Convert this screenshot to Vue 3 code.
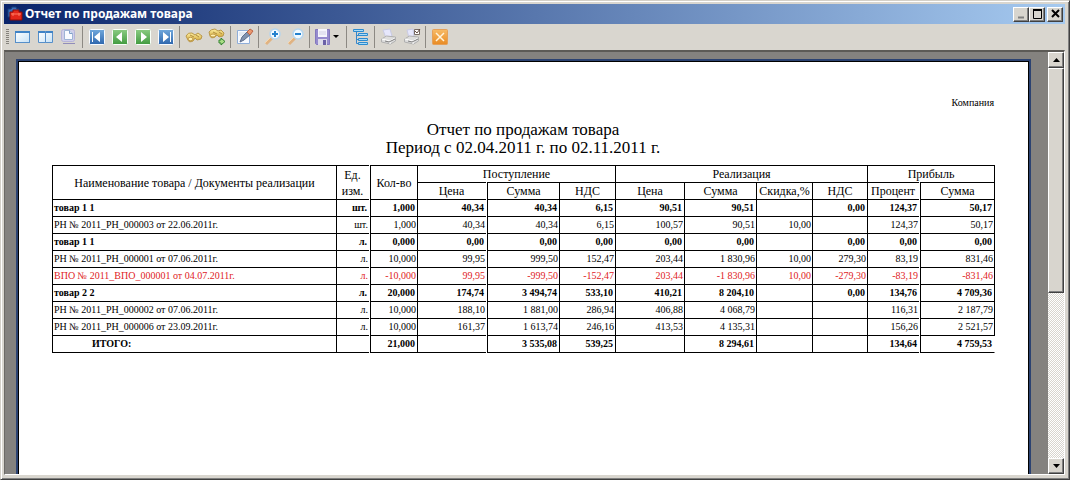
<script setup>
const rows = [
  { kind: 'group', cells: ['товар 1 1', 'шт.', '1,000', '40,34', '40,34', '6,15', '90,51', '90,51', '', '0,00', '124,37', '50,17'] },
  { kind: 'doc', cells: ['РН № 2011_РН_000003 от 22.06.2011г.', 'шт.', '1,000', '40,34', '40,34', '6,15', '100,57', '90,51', '10,00', '', '124,37', '50,17'] },
  { kind: 'group', cells: ['товар 1 1', 'л.', '0,000', '0,00', '0,00', '0,00', '0,00', '0,00', '', '0,00', '0,00', '0,00'] },
  { kind: 'doc', cells: ['РН № 2011_РН_000001 от 07.06.2011г.', 'л.', '10,000', '99,95', '999,50', '152,47', '203,44', '1 830,96', '10,00', '279,30', '83,19', '831,46'] },
  { kind: 'doc refund', cells: ['ВПО № 2011_ВПО_000001 от 04.07.2011г.', 'л.', '-10,000', '99,95', '-999,50', '-152,47', '203,44', '-1 830,96', '10,00', '-279,30', '-83,19', '-831,46'] },
  { kind: 'group', cells: ['товар 2 2', 'л.', '20,000', '174,74', '3 494,74', '533,10', '410,21', '8 204,10', '', '0,00', '134,76', '4 709,36'] },
  { kind: 'doc', cells: ['РН № 2011_РН_000002 от 07.06.2011г.', 'л.', '10,000', '188,10', '1 881,00', '286,94', '406,88', '4 068,79', '', '', '116,31', '2 187,79'] },
  { kind: 'doc', cells: ['РН № 2011_РН_000006 от 23.09.2011г.', 'л.', '10,000', '161,37', '1 613,74', '246,16', '413,53', '4 135,31', '', '', '156,26', '2 521,57'] },
  { kind: 'group total', cells: ['ИТОГО:', '', '21,000', '', '3 535,08', '539,25', '', '8 294,61', '', '', '134,64', '4 759,53'] },
]
const gaps = [1, 3, 10]
</script>

<template>
  <div class="window">
    <header class="titlebar">
      <svg class="logo" width="16" height="16" viewBox="0 0 16 16">
        <path d="M1 3h3l1-2h4l1 2h2v8H1z" fill="#3a6db8" stroke="#163c78" />
        <path d="M3 6h3V4h6v2h3v8H3z" fill="#e3271a" stroke="#8c0d08" />
        <path d="M4 8h10M6 7v3M12 7v3" stroke="#ff7a60" />
      </svg>
      <h1>Отчет по продажам товара</h1>
      <div class="controls">
        <button class="raised" aria-label="Свернуть"><svg width="13" height="12"><path d="M3 9.500h6" stroke="#808080" stroke-width="2" /></svg></button>
        <button class="raised" aria-label="Развернуть"><svg width="13" height="12"><path d="M2.500 2v8.500h8V2M2 2.500h9M2 1.500h9" fill="none" stroke="#000" /></svg></button>
        <button class="raised close" aria-label="Закрыть"><svg width="13" height="12"><path d="M3 2l7 7M10 2l-7 7" stroke="#000" stroke-width="2" /></svg></button>
      </div>
    </header>

    <nav class="toolbar" aria-label="Панель инструментов">
      <span class="grip"></span>
      <button aria-label="Одна страница"><svg width="18" height="18"><rect x="1.500" y="3.500" width="14" height="11" fill="url(#pane)" stroke="#568fc9" /><path d="M1 4h15" stroke="#3f83c6" stroke-width="2" />
        <defs>
          <linearGradient id="pane" x2="1" y2="1"><stop stop-color="#fff" /><stop offset="1" stop-color="#c7e2f6" /></linearGradient>
          <linearGradient id="blue" x2="0" y2="1"><stop stop-color="#72a9dc" /><stop offset="1" stop-color="#2d66ad" /></linearGradient>
          <linearGradient id="green" x2="0" y2="1"><stop stop-color="#8ccc83" /><stop offset="1" stop-color="#419b3f" /></linearGradient>
          <linearGradient id="gold" x2="0" y2="1"><stop stop-color="#fff1a4" /><stop offset="1" stop-color="#cc9f2e" /></linearGradient>
          <linearGradient id="orange" x2="0" y2="1"><stop stop-color="#f7bb67" /><stop offset="1" stop-color="#e88b24" /></linearGradient>
        </defs></svg></button>
      <button aria-label="Две страницы"><svg width="18" height="18"><path d="M1.500 3.500h7v11h-7zM8.500 3.500h7v11h-7z" fill="url(#pane)" stroke="#568fc9" /><path d="M1 4h7M9 4h7" stroke="#3f83c6" stroke-width="2" /></svg></button>
      <button aria-label="Ширина страницы"><svg width="18" height="18"><rect x="1.500" y="1.500" width="13" height="12" rx="2" fill="#d0cfe9" stroke="#b5b3d9" /><path d="M4.500 2.500h5l3 3v6h-8z" fill="#f8fbff" stroke="#9eb4d5" /><path d="M9.500 2.500v3h3" fill="#d6e4f5" stroke="#809ec8" /><path d="M3 15.500h12" stroke="#918dba" /></svg></button>
      <span class="sep"></span>
      <button aria-label="Первая страница"><svg width="18" height="18"><rect x="1.500" y="1.500" width="15" height="15" rx="1" fill="url(#blue)" stroke="#f8fbff" /><path d="M4 4h1v10H4zM12 4v10L6 9z" fill="#fff" /></svg></button>
      <button aria-label="Предыдущая страница"><svg width="18" height="18"><rect x="1.500" y="1.500" width="15" height="15" rx="1" fill="url(#green)" stroke="#f8fff8" /><path d="M11 4v10L5 9z" fill="#fff" /></svg></button>
      <button aria-label="Следующая страница"><svg width="18" height="18"><rect x="1.500" y="1.500" width="15" height="15" rx="1" fill="url(#green)" stroke="#f8fff8" /><path d="M7 4v10l6-5z" fill="#fff" /></svg></button>
      <button aria-label="Последняя страница"><svg width="18" height="18"><rect x="1.500" y="1.500" width="15" height="15" rx="1" fill="url(#blue)" stroke="#f8fbff" /><path d="M13 4h1v10h-1zM6 4v10l6-5z" fill="#fff" /></svg></button>
      <span class="sep"></span>
      <button aria-label="Найти"><svg width="18" height="18"><path d="M1 8q2-4 6-3l3 2 3-2 4 3-1 3-4 1-2-2-2 3q-4 2-5-1z" fill="url(#gold)" stroke="#b9984b" /><ellipse cx="5.500" cy="11" rx="2.500" ry="1.700" fill="#fff0b0" stroke="#c19c48" /><path d="M5 7l4 2M11 7l3 2" stroke="#b08e40" /></svg></button>
      <button aria-label="Найти далее"><svg width="18" height="18"><path d="M1 4q2-3 6-3l3 2 3-1 3 3-1 3-4 1-2-2-2 2q-4 2-5-1z" fill="url(#gold)" stroke="#b9984b" /><ellipse cx="5" cy="7.500" rx="2.500" ry="1.500" fill="#fff0b0" stroke="#c19c48" /><path d="M5 4l4 2M11 4l3 2" stroke="#b08e40" /><path d="M11 12h2v-2l4 3.500-4 3.500v-2h-2z" fill="#a9dd85" stroke="#32832e" /></svg></button>
      <span class="sep"></span>
      <button aria-label="Редактировать"><svg width="18" height="18"><path d="M1.500 2.500h12v13h-12z" fill="#f7faff" stroke="#8faed9" /><path d="M3 5h7M3 7h5" stroke="#cfdae9" /><path d="M4 14l2-5 6-6 3 3-7 6z" fill="#8093b0" stroke="#5d6d8c" /><path d="M11 4l3-3 3 2-3 4z" fill="#ea9870" stroke="#bd6546" /></svg></button>
      <span class="sep"></span>
      <button aria-label="Увеличить"><svg width="18" height="18"><path d="M2 16l6-6" stroke="#e0b382" stroke-width="3" /><path d="M1 15l6-6" stroke="#f9d7ac" /><circle cx="11" cy="6" r="5" fill="#f1faff" stroke="#b5d5ee" stroke-width="1.500" /><path d="M8 6h6M11 3v6" stroke="#2482cf" stroke-width="2" /></svg></button>
      <button aria-label="Уменьшить"><svg width="18" height="18"><path d="M2 16l6-6" stroke="#e0b382" stroke-width="3" /><path d="M1 15l6-6" stroke="#f9d7ac" /><circle cx="11" cy="6" r="5" fill="#f1faff" stroke="#b5d5ee" stroke-width="1.500" /><path d="M8 6h6" stroke="#2482cf" stroke-width="2" /></svg></button>
      <span class="sep"></span>
      <button class="save" aria-label="Сохранить"><svg width="28" height="18"><path d="M1.500 1.500h14v15h-13l-1-1z" fill="#968bce" stroke="#8378bd" /><path d="M4 1h9v8H4z" fill="#f5f5fc" /><path d="M5 4h7M5 6h7" stroke="#d2d0e5" /><path d="M4 11h9v6H4z" fill="#dddbea" /><path d="M9 12h3v5H9z" fill="#6b61a7" /><path d="M19 7h6l-3 3z" fill="#000" /></svg></button>
      <span class="sep"></span>
      <button aria-label="Структура"><svg width="18" height="18"><path d="M4.500 4v11.500H8M4.500 7.500H8M4.500 11.500H8" fill="none" stroke="#3687ca" /><path d="M1.500 1.500h10v2h-10zM6.500 5.500h9v2h-9zM6.500 10.500h9v2h-9zM6.500 14.500h9v2h-9z" fill="#a8dbf8" stroke="#2c8bcf" /></svg></button>
      <span class="sep"></span>
      <button aria-label="Печать"><svg width="18" height="18"><path d="M3 2l7-1 2 7-6 2z" fill="#e6e7fc" stroke="#c9cbe4" /><path d="M1.500 11l5-3 9 1v4l-5 3-9-2z" fill="#dedede" stroke="#b0b0b0" /><path d="M2 11l8 2 5-3M10 13v3" fill="none" stroke="#fff" /><path d="M5 13l4 1 6-3" fill="none" stroke="#7e7e7e" /></svg></button>
      <button aria-label="Настройка печати"><svg width="18" height="18"><path d="M4 2l6-1 1 7-5 2z" fill="#e6e7fc" stroke="#c9cbe4" /><path d="M1.500 11l5-3 9 1v4l-5 3-9-2z" fill="#dedede" stroke="#b0b0b0" /><path d="M2 11l8 2 5-3M10 13v3" fill="none" stroke="#fff" /><path d="M5 13l4 1 6-3" fill="none" stroke="#7e7e7e" /><path d="M11.500 1.500h5v5h-5z" fill="#fff" stroke="#776b65" /><path d="M12 3l2 2 3-4" fill="none" stroke="#654d43" /></svg></button>
      <span class="sep"></span>
      <button aria-label="Закрыть отчет"><svg width="18" height="18"><rect x="1.500" y="1.500" width="15" height="15" rx="1" fill="url(#orange)" stroke="#e5a059" /><path d="M5 5l8 8M13 5l-8 8" stroke="#fff4dd" stroke-width="1.500" /></svg></button>
    </nav>

    <main class="viewport">
      <div class="desk">
        <article class="page">
          <p class="company">Компания</p>
          <h2>Отчет по продажам товара<br>Период с 02.04.2011 г. по 02.11.2011 г.</h2>
          <table>
            <colgroup>
              <col class="name"><col class="unit"><col class="qty"><col class="price"><col class="sum"><col class="vat">
              <col class="price-out"><col class="sum"><col class="vat"><col class="vat-out"><col class="percent"><col class="profit">
            </colgroup>
            <thead>
              <tr>
                <th rowspan="2">Наименование товара / Документы реализации</th>
                <th rowspan="2" class="gap">Ед.<br>изм.</th>
                <th rowspan="2">Кол-во</th>
                <th colspan="3">Поступление</th>
                <th colspan="4">Реализация</th>
                <th colspan="2">Прибыль</th>
              </tr>
              <tr>
                <th class="gap">Цена</th><th>Сумма</th><th>НДС</th>
                <th>Цена</th><th>Сумма</th><th>Скидка,%</th><th>НДС</th>
                <th class="gap">Процент</th><th>Сумма</th>
              </tr>
            </thead>
            <tbody>
              <tr v-for="(row, r) in rows" :key="r" :class="row.kind">
                <td v-for="(cell, c) in row.cells" :key="c" :class="{ gap: gaps.includes(c) }">{{ cell }}</td>
              </tr>
            </tbody>
          </table>
        </article>
      </div>
      <div class="scrollbar">
        <button class="raised" aria-label="Прокрутить вверх"><svg width="7" height="4"><path d="M0 4h7L3.500 0z" /></svg></button>
        <div class="thumb raised"></div>
        <div class="track"></div>
        <button class="raised" aria-label="Прокрутить вниз"><svg width="7" height="4"><path d="M0 0h7L3.500 4z" /></svg></button>
      </div>
    </main>
  </div>
</template>

<style>
body { margin: 0; overflow: hidden; }
</style>

<style scoped>
* { box-sizing: border-box; }
button { padding: 0; margin: 0; border: 0; background: none; display: flex; align-items: center; justify-content: center; }
svg { display: block; flex: none; }
.window {
  height: 100vh;
  display: flex;
  flex-direction: column;
  padding: 2px 3px 3px 2px;
  background: #d9d6cf;
  border: 1px solid;
  border-color: #d4d0c8 #404040 #404040 #d4d0c8;
  box-shadow: inset 1px 1px #fff, inset -1px -1px #808080;
}
.titlebar {
  flex: none;
  height: 20px;
  margin: 1px 1px 0;
  padding: 0 2px 0 3px;
  display: flex;
  align-items: center;
  background: linear-gradient(90deg, #0a246a, #a6caf0);
}
.titlebar h1 {
  flex: 1;
  margin: 0 0 0 2px;
  color: #fff;
  font: bold 12px/20px "Noto Sans", "DejaVu Sans", sans-serif;
  white-space: nowrap;
}
.controls { display: flex; }
.raised {
  background: #d8d5ce;
  border: 1px solid;
  border-color: #fff #404040 #404040 #fff;
  box-shadow: inset -1px -1px #808080;
}
.controls button { width: 16px; height: 15px; }
.controls .close { margin-left: 2px; }
.toolbar { flex: none; height: 26px; display: flex; align-items: center; padding: 0 3px; }
.toolbar button { width: 23px; height: 23px; }
.toolbar .save { width: 32px; }
.grip {
  width: 3px;
  height: 16px;
  margin-right: 2px;
  background: repeating-linear-gradient(#85827c 0 1px, #d9d6cf 1px 2px);
}
.sep { width: 5px; height: 22px; background: linear-gradient(#8c8983, #8c8983) center / 1px 100% no-repeat; }
.viewport {
  flex: 1;
  min-height: 0;
  display: flex;
  margin: 0 1px 1px;
  border: solid;
  border-width: 2px 1px 1px;
  border-color: #5c5a56 #fff #fff #6c6a66;
}
.desk { flex: 1; min-width: 0; overflow: hidden; display: flex; background: #84827f; padding: 9px 17px 0 11px; }
.page {
  flex: 1;
  min-width: 0;
  background: #fff;
  border: solid #000;
  border-width: 1px 1px 0;
  box-shadow: 0 0 0 2px #2b4271;
  margin: 0 2px;
  padding: 34px 34px 0 33px;
  font-family: "Liberation Serif", serif;
  color: #000;
}
.company { margin: 0; text-align: right; font-size: 10px; line-height: 14px; }
h2 { margin: 11px 0 8px; text-align: center; font-size: 17px; font-weight: 400; line-height: 18px; }
table { width: 100%; table-layout: fixed; border-collapse: separate; border-spacing: 0; border: solid #000; border-width: 1px 0 0 1px; }
.name { width: 284px; }
.unit { width: 34px; }
.qty { width: 47px; }
.price { width: 70px; }
.sum { width: 72px; }
.vat { width: 56px; }
.price-out { width: 69px; }
.vat-out { width: 55px; }
.percent { width: 53px; }
.profit { width: 74px; }
th, td { position: relative; height: 17px; padding: 0; border: solid #000; border-width: 0 1px 1px 0; white-space: nowrap; line-height: 14px; }
th { font-size: 12px; font-weight: 400; line-height: 16px; text-align: center; vertical-align: middle; }
td { font-size: 10px; text-align: right; padding-right: 1px; }
td:first-child { text-align: left; padding-left: 1px; }
.gap { padding-right: 2px; }
.gap::after { content: ""; position: absolute; top: -1px; right: 0; bottom: -1px; width: 1px; background: #fff; }
.group td { font-weight: 700; padding-right: 2px; }
.group .gap { padding-right: 3px; }
.refund td { color: #e01b24; }
.total td:first-child { padding-left: 39px; }
.total td:last-child { border-right-color: transparent; }
.scrollbar { flex: none; width: 16px; display: flex; flex-direction: column; }
.scrollbar button { flex: none; width: 16px; height: 16px; }
.thumb { flex: 225 1 0; }
.track { flex: 166 1 0; background: repeating-conic-gradient(#fff 0 25%, #d8d5ce 0 50%) 0 0 / 2px 2px; }
</style>
